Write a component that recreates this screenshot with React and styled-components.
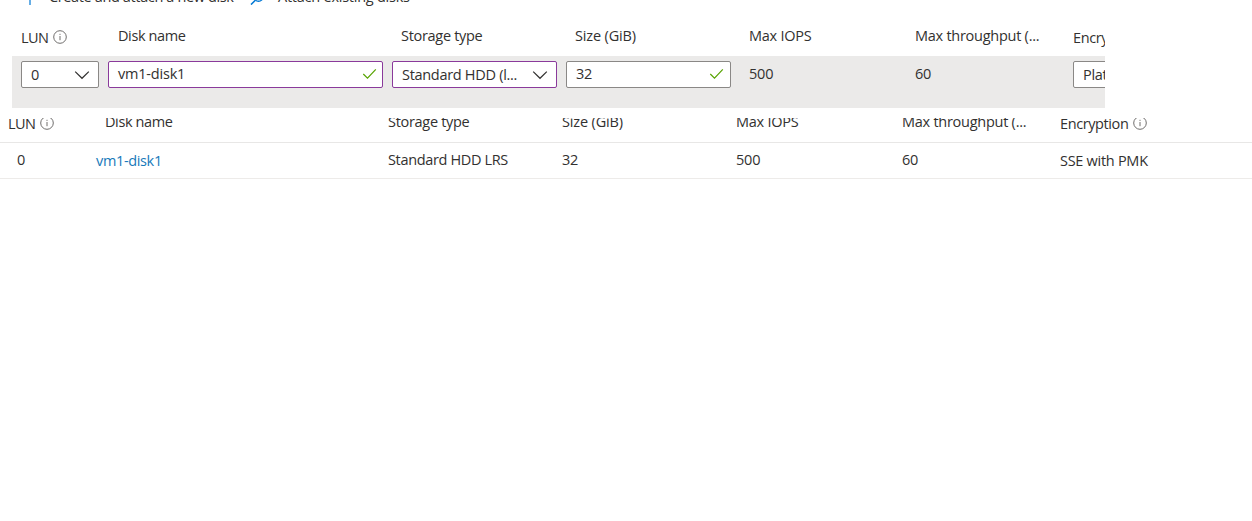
import React from 'react';
import styled, { createGlobalStyle, css } from 'styled-components';

const Global = createGlobalStyle`
  html, body { margin: 0; background: #fff; overflow: hidden; }
  * { box-sizing: border-box; }
`;

const Page = styled.main`
  height: 521px;
  overflow: hidden;
  font: 14.5px/20px 'Open Sans', 'Noto Sans', sans-serif;
  color: #323130;
`;

const EditPanel = styled.section`
  width: 1105px;
  height: 108px;
  overflow: hidden;
  display: flex;
  flex-direction: column;
`;

const Toolbar = styled.div`
  display: flex;
  height: 26px;
  flex: none;
  padding-left: 22px;
`;

const Command = styled.div`
  display: flex;
  align-items: center;
  height: 20px;
  margin-top: -13px;
  width: ${p => p.$width}px;
  gap: ${p => p.$gap}px;
`;

const Text = styled.span`
  white-space: nowrap;
  letter-spacing: ${p => p.$track || 0}px;
`;

const columns = css`
  display: grid;
  grid-template-columns: 87px 284px 174px 174px 166px 167px 192px;
`;

const HeaderRow = styled.div`
  ${columns}
  flex: none;
  height: ${p => p.$height}px;
  padding-left: ${p => p.$left}px;
`;

const HeaderCell = styled.div`
  display: flex;
  align-items: center;
  height: 20px;
  gap: 5px;
  padding-left: ${p => p.$pad || 0}px;
  margin-top: ${p => p.$top || 0}px;
`;

const EditRow = styled.div`
  ${columns}
  height: 52px;
  margin-left: 12px;
  padding: 5px 0 0 9px;
  background: #ebeae9;
`;

const Field = styled.div`
  display: flex;
  align-items: center;
  justify-content: space-between;
  height: 27px;
  margin-right: 9px;
  padding: 0 ${p => p.$end || 8}px ${p => p.$lift || 0}px 9px;
  border: 1px solid ${p => (p.$changed ? '#8a3a9b' : '#8a8886')};
  border-radius: 2px;
  background: #fff;
`;

const Value = styled.div`
  padding: 3px 0 0 9px;
  letter-spacing: -0.2px;
`;

const DiskPanel = styled.section`
  height: 61px;
  margin-top: 10px;
  overflow: hidden;
`;

const DiskHeader = styled(HeaderRow)`
  margin-top: -6px;
  border-bottom: 1px solid #e8e7e6;
`;

const DiskRow = styled.div`
  ${columns}
  height: 36px;
  padding-left: 8px;
  border-bottom: 1px solid #edebe9;
`;

const Cell = styled.div`
  padding: ${p => p.$top || 7}px 0 0 ${p => (p.$pad === undefined ? 9 : p.$pad)}px;
  color: ${p => (p.$link ? '#1779ba' : 'inherit')};
`;

const InfoIcon = styled.svg`
  flex: none;
  margin-top: -2px;
`;

const Info = () => (
  <InfoIcon width="14" height="14" viewBox="0 0 14 14" fill="none" stroke="#605e5c">
    <circle cx="7" cy="7" r="6.3" strokeWidth="0.9" />
    <path d="M7 6v4.2M7 3.8v1.1" strokeWidth="0.9" />
  </InfoIcon>
);

const Chevron = () => (
  <svg width="16" height="10" viewBox="0 0 16 10" fill="none" stroke="#323130" strokeWidth="1.2">
    <path d="M1.2 1.6L8 8.3l6.8-6.7" />
  </svg>
);

const Check = () => (
  <svg width="15" height="12" viewBox="0 0 15 12" fill="none" stroke="#57a300" strokeWidth="1.2">
    <path d="M1.3 6l4.2 4.2L13.8 1.4" />
  </svg>
);

const Plus = () => (
  <svg width="16" height="16" viewBox="0 0 16 16" stroke="#0078d4" strokeWidth="1.2">
    <path d="M8 1v15M1 8h14" />
  </svg>
);

const Search = () => (
  <svg width="16" height="16" viewBox="0 0 16 16" fill="none" stroke="#0078d4" strokeWidth="1.5">
    <circle cx="9.5" cy="8" r="4.3" />
    <path d="M6.3 11.3L2 15.6" />
  </svg>
);

function Headings() {
  return (
    <>
      <HeaderCell $pad={10}><Text $track={-0.4}>Disk name</Text></HeaderCell>
      <HeaderCell $pad={9}><Text $track={-0.3}>Storage type</Text></HeaderCell>
      <HeaderCell $pad={9}><Text $track={-0.15}>Size (GiB)</Text></HeaderCell>
      <HeaderCell $pad={9}><Text $track={-0.25}>Max IOPS</Text></HeaderCell>
      <HeaderCell $pad={9}><Text $track={-0.26}>Max throughput (...</Text></HeaderCell>
      <HeaderCell $top={2}><Text $track={-0.4}>Encryption</Text><Info /></HeaderCell>
    </>
  );
}

export default function App() {
  return (
    <Page>
      <Global />
      <EditPanel>
        <Toolbar>
          <Command $width={227} $gap={11}><Plus /><Text $track={-0.37}>Create and attach a new disk</Text></Command>
          <Command $width={200} $gap={13}><Search /><Text $track={-0.24}>Attach existing disks</Text></Command>
        </Toolbar>
        <HeaderRow $height={30} $left={21}>
          <HeaderCell $top={2}><Text $track={-0.6}>LUN</Text><Info /></HeaderCell>
          <Headings />
        </HeaderRow>
        <EditRow>
          <Field><Text>0</Text><Chevron /></Field>
          <Field $changed $end={5} $lift={1}><Text $track={-0.2}>vm1-disk1</Text><Check /></Field>
          <Field $changed><Text $track={-0.3}>Standard HDD (l...</Text><Chevron /></Field>
          <Field $end={6} $lift={1}><Text $track={-0.2}>32</Text><Check /></Field>
          <Value>500</Value>
          <Value>60</Value>
          <Field><Text $track={-0.3}>Platform-managed key</Text><Chevron /></Field>
        </EditRow>
      </EditPanel>
      <DiskPanel>
        <DiskHeader $height={31} $left={8}>
          <HeaderCell $top={2}><Text $track={-0.6}>LUN</Text><Info /></HeaderCell>
          <Headings />
        </DiskHeader>
        <DiskRow>
          <Cell>0</Cell>
          <Cell $link $pad={1} $top={8}><Text $track={-0.35}>vm1-disk1</Text></Cell>
          <Cell><Text $track={-0.35}>Standard HDD LRS</Text></Cell>
          <Cell><Text $track={-0.2}>32</Text></Cell>
          <Cell><Text $track={-0.2}>500</Text></Cell>
          <Cell><Text $track={-0.2}>60</Text></Cell>
          <Cell $pad={0} $top={8}><Text $track={-0.28}>SSE with PMK</Text></Cell>
        </DiskRow>
      </DiskPanel>
    </Page>
  );
}
